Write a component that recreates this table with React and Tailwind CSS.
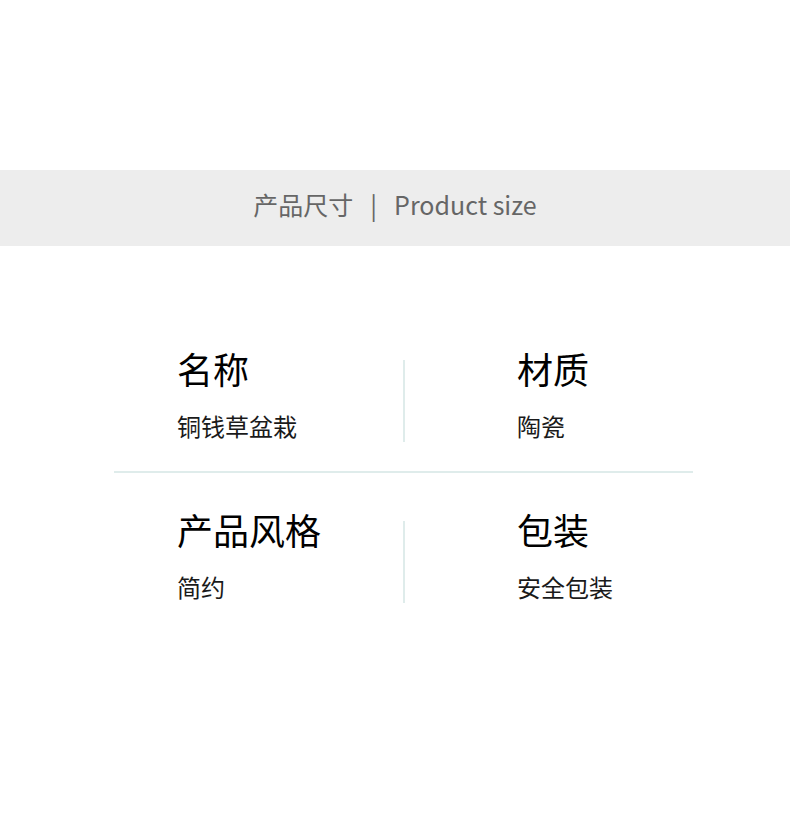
const specs = [
    [
        { label: "名称", value: "铜钱草盆栽" },
        { label: "材质", value: "陶瓷" },
    ],
    [
        { label: "产品风格", value: "简约" },
        { label: "包装", value: "安全包装" },
    ],
];

const Cell = ({ label, value, className }) => (
    <div className={`flex flex-col ${className}`}>
        <div className="text-[36px] leading-[44px] text-black">{label}</div>
        <div className="mt-[20px] text-[24px] leading-[32px] text-[#1a1a1a]">{value}</div>
    </div>
);

const App = () => {
    return (
        <div
            className="min-h-[813px] w-full bg-white pt-[170px]"
            style={{ fontFamily: '"Noto Sans CJK SC", "Noto Sans", sans-serif' }}
        >
            <div className="flex h-[76px] items-center justify-center bg-[#ededed] pb-[7px] text-[25px] text-[#666666]">
                <span>产品尺寸</span>
                <span className="mx-[17px]">|</span>
                <span>Product size</span>
            </div>

            <div className="mx-[114px] mt-[100px] w-[579px]">
                {specs.map((row, i) => (
                    <div key={i}>
                        {i > 0 && <div className="mt-[29px] mb-[34px] h-[2px] bg-[#dfeceb]" />}
                        <div className="flex items-start">
                            <Cell {...row[0]} className="w-[289px] pl-[63px]" />
                            <div className="mt-[14px] h-[82px] w-[2px] bg-[#dfeceb]" />
                            <Cell {...row[1]} className="pl-[112px]" />
                        </div>
                    </div>
                ))}
            </div>
        </div>
    );
};

export default App;
